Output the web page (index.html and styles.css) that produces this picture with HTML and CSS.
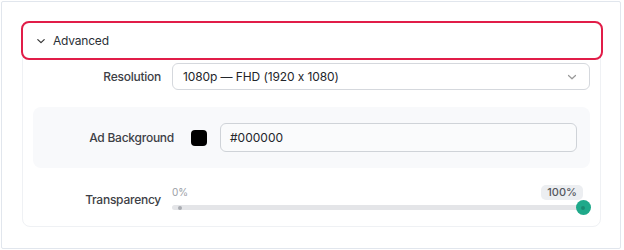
FILE: index.html
```
<!DOCTYPE html>
<html lang="en">
<head>
  <meta charset="UTF-8" />
  <meta name="viewport" content="width=device-width, initial-scale=1" />
  <title>Advanced settings</title>
  <link rel="stylesheet" href="styles.css">
</head>
<body>

  <div class="frame">
    <div class="card">

      <div class="section-head">
        <svg class="chev" width="10" height="10" viewBox="0 0 10 10"><path d="M1.8 3.6 L5 6.6 L8.2 3.6" fill="none" stroke="#333" stroke-width="1.2" stroke-linecap="round" stroke-linejoin="round"/></svg>
        <span>Advanced</span>
      </div>

      <div class="row">
        <label class="label">Resolution</label>
        <div class="select">
          <span>1080p — FHD (1920 x 1080)</span>
          <svg width="10" height="10" viewBox="0 0 10 10"><path d="M1.5 3.5 L5 6.8 L8.5 3.5" fill="none" stroke="#999" stroke-width="1.2" stroke-linecap="round" stroke-linejoin="round"/></svg>
        </div>
      </div>

      <div class="panel">
        <label class="label">Ad Background</label>
        <div class="swatch"></div>
        <div class="text-input">#000000</div>
      </div>

      <div class="row slider-row">
        <label class="label">Transparency</label>
        <div class="slider">
          <div class="slider-top">
            <span class="min">0%</span>
            <span class="badge">100%</span>
          </div>
          <div class="track">
            <span class="start-dot"></span>
            <span class="thumb"></span>
          </div>
        </div>
      </div>

    </div>
  </div>

</body>
</html>
```

FILE: styles.css
```
* {
  box-sizing: border-box;
}
body {
  margin: 0;
  background: #fff;
  font-family: Inter, "Noto Sans", sans-serif;
  font-feature-settings: "calt" 0;
  color: #222;
}
.frame {
  margin: 1px 3px 1px 1px;
  height: 248px;
  border: 1px solid #e1e6ed;
  border-radius: 2px;
  padding: 19px 19px 0 20px;
}
.card {
  border: 1px solid #eff1f4;
  border-radius: 8px;
  padding: 0 10px 16px 10px;
}
.section-head {
  display: flex;
  align-items: center;
  height: 39px;
  margin: -1px -13px 3px -12px;
  border: 2px solid #e11d48;
  border-radius: 8px;
  padding-left: 13px;
  font-size: 12px;
  letter-spacing: -0.2px;
  color: #2b2f36;
  background: #fff;
}
.section-head .chev {
  margin-right: 7px;
}
.row {
  display: grid;
  grid-template-columns: 128px 1fr;
  column-gap: 11px;
  align-items: center;
}
.label {
  text-align: right;
  font-size: 12px;
  font-weight: 500;
  letter-spacing: -0.25px;
  color: #3d4046;
}
.select {
  display: flex;
  align-items: center;
  justify-content: space-between;
  height: 27px;
  border: 1px solid #d5d8dd;
  border-radius: 6px;
  padding: 0 12px 0 10px;
  font-size: 12px;
  letter-spacing: -0.1px;
  color: #23262b;
}
.panel {
  display: flex;
  align-items: center;
  margin-top: 17px;
  padding: 16px 13px;
  background: #f8f9fb;
  border-radius: 8px;
}
.panel .label {
  width: 128px;
  flex: none;
}
.swatch {
  width: 16px;
  height: 16px;
  margin: 0 13px 0 17px;
  border-radius: 4px;
  background: #000;
  flex: none;
}
.text-input {
  flex: 1;
  height: 29px;
  display: flex;
  align-items: center;
  padding-left: 9px;
  border: 1px solid #cfd3d8;
  border-radius: 6px;
  background: #fafbfc;
  font-size: 12px;
  color: #23262b;
}
.slider-row {
  margin-top: 17px;
}
.slider-row .label {
  padding-top: 3px;
}
.slider-top {
  display: flex;
  justify-content: space-between;
  align-items: center;
  height: 15px;
  padding-right: 7px;
}
.min {
  font-size: 10px;
  color: #9a9ea5;
  margin-top: -1px;
}
.badge {
  font-size: 11px;
  font-weight: 500;
  color: #55585e;
  background: #eceef1;
  border-radius: 5px;
  padding: 1px 6px;
  line-height: 13px;
}
.track {
  position: relative;
  height: 5px;
  margin-top: 5px;
  background: #e4e5e8;
  border-radius: 3px;
}
.start-dot {
  position: absolute;
  left: 6px;
  top: 0.5px;
  width: 4px;
  height: 4px;
  border-radius: 50%;
  background: #a9acb1;
}
.thumb {
  position: absolute;
  right: -0.5px;
  top: -5px;
  width: 15px;
  height: 15px;
  border-radius: 50%;
  background: #1fa98a;
}
.thumb::after {
  content: "";
  position: absolute;
  left: 5.5px;
  top: 5.5px;
  width: 4px;
  height: 4px;
  border-radius: 50%;
  background: rgba(0, 0, 0, 0.18);
}
```
